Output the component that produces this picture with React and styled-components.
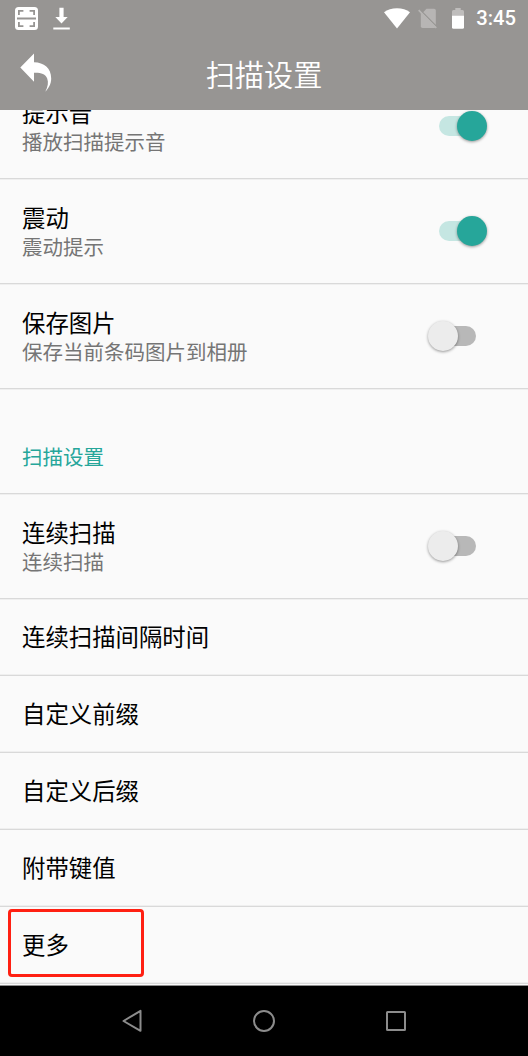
import React from 'react'
import styled, { createGlobalStyle, css } from 'styled-components'

const GlobalStyle = createGlobalStyle`
  body {
    margin: 0;
    background: #fafafa;
    font-family: 'Noto Sans CJK SC', sans-serif;
  }
`
const Screen = styled.div`
  display: flex;
  flex-direction: column;
  width: 528px;
  height: 1056px;
  overflow: hidden;
  background: #fafafa;
`
const Header = styled.header`
  flex: none;
  height: 110px;
  background: #979593;
  color: #fff;
`
const StatusBar = styled.div`
  display: flex;
  align-items: center;
  justify-content: space-between;
  height: 36px;
  padding: 0 12px 0 15px;
`
const StatusGroup = styled.div`
  display: flex;
  align-items: center;
  gap: ${p => p.$gap}px;

  svg {
    display: block;
  }
`
const Clock = styled.span`
  margin-left: -2px;
  font-family: Roboto, sans-serif;
  font-size: 20.2px;
  font-weight: 500;
  line-height: 36px;
`
const TitleBar = styled.div`
  display: grid;
  grid-template-columns: 74px 1fr 74px;
  align-items: center;
  height: 74px;
`
const BackButton = styled.button`
  display: block;
  justify-self: start;
  margin: 0;
  padding: 0 0 1px 20px;
  border: 0;
  background: none;
  line-height: 0;
`
const Title = styled.h1`
  margin: 0;
  font-size: 29.2px;
  font-weight: 350;
  line-height: 74px;
  text-align: center;
`
const Scroller = styled.main`
  flex: none;
  box-sizing: border-box;
  height: 876px;
  overflow: hidden;
  border-bottom: 1px solid #8e8e8e;
`
const List = styled.div`
  margin-top: -36px;
`
const Row = styled.div`
  position: relative;
  box-sizing: border-box;
  display: flex;
  align-items: center;
  justify-content: space-between;
  height: 105px;
  padding: 0 41px 0 22px;
  border-bottom: 1px solid #d9d9d9;
  box-shadow: 0 1px 0 #efefef;

  ${p =>
    p.$compact &&
    css`
      height: 77px;
      padding-bottom: 2px;
      box-shadow: inset 0 -1px 0 #efefef;
    `}
`
const RowTitle = styled.div`
  font-size: 23.4px;
  line-height: 31px;
  color: #000;
`
const RowSummary = styled.div`
  font-size: 20.5px;
  line-height: 27px;
  color: #757575;
`
const SectionTitle = styled.div`
  margin-top: 30px;
  font-size: 20.5px;
  line-height: 30px;
  color: #26a69a;
`
const Track = styled.div`
  box-sizing: border-box;
  width: 59px;
  height: 30px;
  margin-bottom: 1px;
  padding: 5px 11px;

  &::before {
    content: '';
    display: block;
    height: 20px;
    border-radius: 10px;
    background: ${p => (p.$on ? '#c5e6e2' : '#b8b8b8')};
  }
`
const Thumb = styled.div`
  width: 30px;
  height: 30px;
  margin-top: -25px;
  margin-left: -11px;
  border-radius: 50%;
  background: #ececec;
  box-shadow: 0 1px 3px rgba(0, 0, 0, 0.4);

  ${p =>
    p.$on &&
    css`
      margin-left: 18px;
      background: #26a69a;
    `}
`
const Highlight = styled.div`
  position: absolute;
  top: 2px;
  left: 8px;
  box-sizing: border-box;
  width: 136px;
  height: 68px;
  border: 3px solid #ff2012;
  border-radius: 4px;
`
const NavBar = styled.nav`
  flex: none;
  display: flex;
  align-items: center;
  justify-content: center;
  gap: 108px;
  height: 70px;
  background: #000;
`

const ScanIcon = () => (
  <svg width="23" height="23" viewBox="0 0 23 23" fill="none">
    <rect width="23" height="23" rx="3.5" fill="#fff" />
    <path
      d="M3.9 8V3.9H8.4M14.6 3.9h4.5V8M3.9 15v4.1H8.4M14.6 19.1h4.5V15M2 11.5h19"
      stroke="#979593"
      strokeWidth="1.8"
    />
  </svg>
)

const DownloadIcon = () => (
  <svg width="17" height="23" viewBox="0 0 17 23" fill="#fff">
    <path d="M6.4 0.8h4.2v9.2h4.1L8.5 16.6 2.3 10h4.1zM0.3 20.4h16.5v2.2H0.3z" />
  </svg>
)

const WifiIcon = () => (
  <svg width="26" height="21" viewBox="0 0 26 21" fill="#fff">
    <path d="M13 20.5 0 4.2C3.4 1.7 8 0.3 13 0.3s9.6 1.4 13 3.9z" />
  </svg>
)

const NoSimIcon = () => (
  <svg width="20" height="21" viewBox="0 0 20 21" fill="#b7b5b4">
    <path d="M8.5 0.8H16q1.8 0 1.8 1.8V17L5.2 4.3z" />
    <path d="M2.8 4.2 17 18.500V19.500q-.4.500-1 .500H4.600q-1.800 0-1.800-1.800z" />
    <path d="M0.7 2.1 18.3 19.9" stroke="#b7b5b4" strokeWidth="1.7" />
    <path d="M2.500 2.100 19 18.700" stroke="#979593" strokeWidth="0.800" />
  </svg>
)

const BatteryIcon = () => (
  <svg width="12" height="21" viewBox="0 0 12 21">
    <path d="M3.3 0h5.4v2H10.5Q12 2 12 3.5V8H0V3.5Q0 2 1.5 2h1.8z" fill="#bfbdbc" />
    <path d="M0 7.8h12v11.5q0 1.5-1.5 1.5h-9Q0 20.8 0 19.3z" fill="#fff" />
  </svg>
)

const BackIcon = () => (
  <svg width="32" height="39" viewBox="0 0 32 39" fill="#fff">
    <path d="M0.3 14.6 14 0.4V9.2C24 9.5 31.2 15 31.2 25.5 31.2 31 28.5 35.5 25.3 38.8 28 33.5 28.6 29.5 27.2 25.6 25.4 20.8 20.5 19.5 14 19.8V28.8z" />
  </svg>
)

const Switch = ({ on }) => (
  <Track $on={on}>
    <Thumb $on={on} />
  </Track>
)

const SwitchRow = ({ title, summary, on }) => (
  <Row>
    <div>
      <RowTitle>{title}</RowTitle>
      <RowSummary>{summary}</RowSummary>
    </div>
    <Switch on={on} />
  </Row>
)

const App = () => (
  <Screen>
    <GlobalStyle />
    <Header>
      <StatusBar>
        <StatusGroup $gap={15}>
          <ScanIcon />
          <DownloadIcon />
        </StatusGroup>
        <StatusGroup $gap={14}>
          <StatusGroup $gap={8}>
            <WifiIcon />
            <NoSimIcon />
          </StatusGroup>
          <BatteryIcon />
          <Clock>3:45</Clock>
        </StatusGroup>
      </StatusBar>
      <TitleBar>
        <BackButton>
          <BackIcon />
        </BackButton>
        <Title>扫描设置</Title>
      </TitleBar>
    </Header>

    <Scroller>
      <List>
        <SwitchRow title="提示音" summary="播放扫描提示音" on />
        <SwitchRow title="震动" summary="震动提示" on />
        <SwitchRow title="保存图片" summary="保存当前条码图片到相册" />
        <Row>
          <SectionTitle>扫描设置</SectionTitle>
        </Row>
        <SwitchRow title="连续扫描" summary="连续扫描" />
        <Row $compact>
          <RowTitle>连续扫描间隔时间</RowTitle>
        </Row>
        <Row $compact>
          <RowTitle>自定义前缀</RowTitle>
        </Row>
        <Row $compact>
          <RowTitle>自定义后缀</RowTitle>
        </Row>
        <Row $compact>
          <RowTitle>附带键值</RowTitle>
        </Row>
        <Row $compact>
          <RowTitle>更多</RowTitle>
          <Highlight />
        </Row>
      </List>
    </Scroller>

    <NavBar>
      <svg width="24" height="24" viewBox="0 0 24 24" fill="none" stroke="#8c8c8c" strokeWidth="2" strokeLinejoin="round">
        <path d="M20.5 1.8v20L3.5 12z" />
      </svg>
      <svg width="24" height="24" viewBox="0 0 24 24" fill="none" stroke="#8c8c8c" strokeWidth="2">
        <circle cx="12" cy="12" r="10" />
      </svg>
      <svg width="24" height="24" viewBox="0 0 24 24" fill="none" stroke="#8c8c8c" strokeWidth="2">
        <rect x="3" y="3" width="18" height="18" rx="0.5" />
      </svg>
    </NavBar>
  </Screen>
)

export default App
